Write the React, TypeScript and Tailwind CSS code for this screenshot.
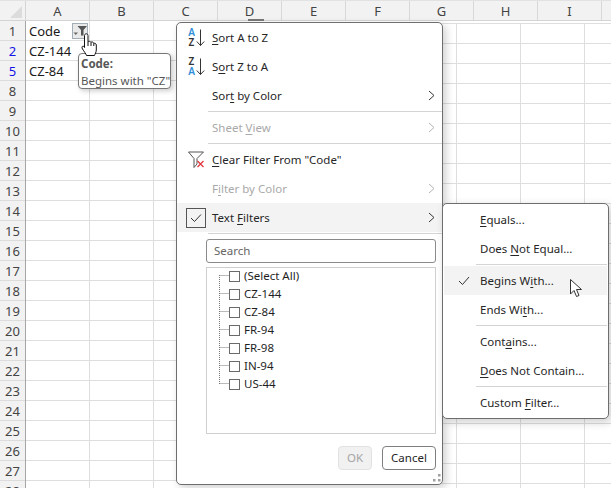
import React from "react";

const font = "font-['Noto_Sans','Open_Sans',sans-serif]";
const rowNums = [1, 2, 5, 8, 9, 10, 11, 12, 13, 14, 15, 16, 17, 18, 19, 20, 21, 22, 23, 24, 25, 26, 27, 28];
const cols = ["A", "B", "C", "D", "E", "F", "G", "H", "I"];
const treeItems = ["(Select All)", "CZ-144", "CZ-84", "FR-94", "FR-98", "IN-94", "US-44"];

function Label({ t }: { t: [string, string, string] }) {
  return (
    <span className="whitespace-pre">
      {t[0]}
      <u className="underline-offset-2">{t[1]}</u>
      {t[2]}
    </span>
  );
}

function Chevron({ disabled }: { disabled?: boolean }) {
  return (
    <svg width="7" height="11" viewBox="0 0 7 11" className="ml-auto mr-[7px]">
      <path d="M1 1l5 4.5L1 10" fill="none" stroke={disabled ? "#b4b4b4" : "#333"} strokeWidth="1" />
    </svg>
  );
}

function SortIcon({ top, bottom }: { top: string; bottom: string }) {
  const fill = (l: string) => (l === "A" ? "#2f8fd8" : "#333");
  return (
    <svg width="20" height="26" viewBox="0 -3 20 26">
      <text x="5.5" y="7.5" textAnchor="middle" fontSize="10" fontWeight="600" fill={fill(top)} fontFamily="Noto Sans">{top}</text>
      <text x="5.5" y="17.5" textAnchor="middle" fontSize="10" fontWeight="600" fill={fill(bottom)} fontFamily="Noto Sans">{bottom}</text>
      <path d="M14.5 1.5v16M10.8 13.5l3.7 4 3.7-4" fill="none" stroke="#333" strokeWidth="1" />
    </svg>
  );
}

function ClearIcon() {
  return (
    <svg width="20" height="20" viewBox="0 0 20 20">
      <path d="M2.5 2H17.5L11 8.5V14L8 17.5V8.5Z" fill="none" stroke="#555" strokeWidth="1" />
      <path d="M11.5 11l6 6M17.5 11l-6 6" fill="none" stroke="#e0383e" strokeWidth="1.3" />
    </svg>
  );
}

function CheckedBox() {
  return (
    <div className="flex h-5 w-5 items-center justify-center border-[1.5px] border-[#555]">
      <svg width="12" height="10" viewBox="0 0 12 10">
        <path d="M1 5l3.5 3.5L11 1.5" fill="none" stroke="#333" strokeWidth="1" />
      </svg>
    </div>
  );
}

function MenuRow({
  t,
  icon,
  chevron,
  disabled,
  active,
}: {
  t: [string, string, string];
  icon?: React.ReactNode;
  chevron?: boolean;
  disabled?: boolean;
  active?: boolean;
}) {
  return (
    <div className={`flex h-[29px] items-center ${active ? "bg-[#f3f3f3]" : ""} ${disabled ? "text-[#a9a9a9]" : "text-[#262626]"}`}>
      <div className="flex w-[35px] shrink-0 pl-[9px]">{icon}</div>
      <Label t={t} />
      {chevron && <Chevron disabled={disabled} />}
    </div>
  );
}

function SubRow({ t, active, check }: { t: [string, string, string]; active?: boolean; check?: boolean }) {
  return (
    <div className={`flex h-[29px] items-center ${active ? "bg-[#f3f3f3]" : ""} text-[#262626]`}>
      <div className="flex w-[36px] shrink-0 justify-end pr-[10px]">
        {check && (
          <svg width="12" height="10" viewBox="0 0 12 10">
            <path d="M1 5l3.5 3.5L11 1" fill="none" stroke="#333" strokeWidth="1" />
          </svg>
        )}
      </div>
      <Label t={t} />
    </div>
  );
}

function Sep({ left }: { left: string }) {
  return <div className={`my-px h-px bg-[#d4d4d4] ${left}`} />;
}

export default function App() {
  return (
    <div className={`relative h-[488px] w-[611px] overflow-hidden bg-white ${font}`}>
      {/* Column header */}
      <div className="relative z-10 flex h-[21px] border-t border-b border-t-[#e2e2e2] border-b-[#d4d4d4] bg-[#f2f2f2] text-[13px] leading-[21px] text-[#444]">
        <div className="flex w-[26px] shrink-0 items-end justify-end border-r border-[#d4d4d4] pb-[2px] pr-[3px]">
          <svg width="12" height="12" viewBox="0 0 12 12">
            <path d="M12 0V12H0Z" fill="#dcdcdc" />
          </svg>
        </div>
        {cols.map((c) => (
          <div key={c} className="relative w-16 shrink-0 border-r border-[#d8d8d8] text-center">
            {c}
            {c === "D" && <div className="absolute bottom-[-1px] left-[30px] h-[2px] w-[16px] bg-[#777]" />}
          </div>
        ))}
      </div>

      {/* Sheet body */}
      <div className="flex text-[13px] leading-[21px] text-[#1a1a1a]">
        <div className="w-[26px] shrink-0 border-r border-[#a6a6a6] bg-[#f2f2f2] text-[#444]">
          {rowNums.map((n) => (
            <div key={n} className={`h-5 border-b border-[#dcdcdc] text-center ${n === 2 || n === 5 ? "text-[#1414e6]" : ""}`}>
              {n}
            </div>
          ))}
        </div>
        <div className="w-[192px] shrink-0">
          {rowNums.map((n) => (
            <div key={n} className="flex h-5 border-b border-[#dedede]">
              <div className="w-16 border-r border-[#dedede] pl-[3px]">
                {n === 1 ? "Code" : n === 2 ? "CZ-144" : n === 5 ? "CZ-84" : ""}
              </div>
              <div className="w-16 border-r border-[#dedede]" />
              <div className="w-16" />
            </div>
          ))}
        </div>
        <div className="flex-1">
          <div className="h-[3px] border-b border-[#dedede]" />
          {rowNums.map((n) => (
            <div key={n} className="flex h-5 border-b border-[#dedede]">
              <div className="w-[239px] border-r border-[#dedede]" />
              <div className="w-16 border-r border-[#dedede]" />
              <div className="w-16 border-r border-[#dedede]" />
            </div>
          ))}
        </div>
      </div>

      {/* Filter button */}
      <div className="absolute left-[72px] top-[23px] z-20 h-4 w-4 border border-[#a3adb8] bg-[#e9e9e9]">
        <svg width="14" height="14" viewBox="0 0 14 14">
          <path d="M4.5 2H14L10.5 6V11.5H8V6Z" fill="#555" />
          <path d="M.5 8.5H5L2.75 11Z" fill="#666" />
        </svg>
      </div>

      {/* Tooltip */}
      <div className="absolute left-[78px] top-[53px] z-20 h-[36px] w-[93px] rounded-[4px] border border-[#777] bg-white pl-[2px] pt-[1px] text-[11.5px] leading-[17px] text-[#575757] shadow-[2px_2px_5px_rgba(0,0,0,0.2)]">
        <div className="font-bold">Code:</div>
        <div className="whitespace-pre">Begins with "CZ"</div>
      </div>

      {/* Hand cursor */}
      <svg className="absolute left-[81px] top-[33px] z-30" width="16" height="23" viewBox="0 0 16 23">
        <path
          d="M4.5 1C5.5.5 7 1 7 2.5V9C7.5 8 9.5 8 10 9.5 10.5 8.5 12.5 8.8 12.8 10.5 13.2 9.8 15.2 10.3 15.3 12V17C15.3 19 14 21 13.5 22.5H5.5C4.8 20.5 3 18.5 1.5 16 .5 14.5 1 13 2.3 13.2 3 13.3 3.3 14 3.5 14.5V2.5C3.5 1.7 4 1.2 4.5 1Z"
          fill="#fff"
          stroke="#111"
          strokeWidth="1"
        />
        <path d="M7 9v4M10 9.5v3.5M12.8 10.5V13" fill="none" stroke="#111" strokeWidth="1" />
      </svg>

      {/* Main dropdown */}
      <div className="absolute left-[176px] top-[22px] z-20 h-[463px] w-[267px] rounded-[5px] border border-[#6e6e6e] bg-white text-[11.5px] shadow-[3px_3px_8px_rgba(0,0,0,0.18)]">
        <MenuRow t={["", "S", "ort A to Z"]} icon={<SortIcon top="A" bottom="Z" />} />
        <MenuRow t={["S", "o", "rt Z to A"]} icon={<SortIcon top="Z" bottom="A" />} />
        <MenuRow t={["Sor", "t", " by Color"]} chevron />
        <Sep left="ml-[31px]" />
        <MenuRow t={["Sheet ", "V", "iew"]} chevron disabled />
        <Sep left="ml-[31px]" />
        <MenuRow t={["", "C", 'lear Filter From "Code"']} icon={<ClearIcon />} />
        <MenuRow t={["F", "i", "lter by Color"]} chevron disabled />
        <MenuRow t={["Text ", "F", "ilters"]} icon={<CheckedBox />} chevron active />
        <Sep left="ml-[31px]" />

        <div className="ml-[29px] mr-[6px] mt-[5px] flex h-6 items-center rounded-[3px] border border-[#8a8a8a] pl-[7px] text-[#666]">
          Search
        </div>

        <div className="relative ml-[29px] mr-[6px] mt-1 h-[167px] border border-[#cfcfcf] text-[#1f1f1f]">
          <div className="-mt-px">
            {treeItems.map((item) => (
              <div key={item} className="flex h-[18px] items-center pl-[22px]">
                <div className="h-[11px] w-[11px] border border-[#6a6a6a] bg-white" />
                <span className="ml-[4px]">{item}</span>
              </div>
            ))}
          </div>
          <svg className="absolute left-[12px] top-[7px]" width="11" height="112" viewBox="0 0 11 112">
            <path
              d="M.5 0V109M.5.5H10M.5 18.5H10M.5 36.5H10M.5 54.5H10M.5 72.5H10M.5 90.5H10M.5 108.5H10"
              fill="none"
              stroke="#777"
              strokeWidth="1"
              strokeDasharray="1 1"
            />
          </svg>
        </div>

        <div className="mr-[6px] mt-[12px] flex justify-end gap-[10px]">
          <div className="flex h-6 w-[34px] items-center justify-center rounded-[4px] border border-[#e2e2e2] bg-[#f1f1f1] text-[#a5a5a5]">OK</div>
          <div className="flex h-6 w-[54px] items-center justify-center rounded-[4px] border border-[#7f7f7f] text-[#262626]">Cancel</div>
        </div>

        <svg className="absolute bottom-[1px] right-[1px]" width="10" height="10" viewBox="0 0 10 10">
          <path d="M7 1h2.5v2.5H7ZM2 6h2.5v2.5H2ZM7 6h2.5v2.5H7Z" fill="#a0a0a0" />
        </svg>
      </div>

      {/* Submenu */}
      <div className="absolute left-[442px] top-[203px] z-20 h-[216px] w-[167px] rounded-[5px] border border-[#6e6e6e] bg-white pl-px pr-px pt-[1px] text-[11.5px] shadow-[3px_3px_10px_rgba(0,0,0,0.2)]">
        <SubRow t={["", "E", "quals..."]} />
        <SubRow t={["Does ", "N", "ot Equal..."]} />
        <Sep left="ml-[32px]" />
        <SubRow t={["Begins W", "i", "th..."]} active check />
        <SubRow t={["Ends Wi", "t", "h..."]} />
        <Sep left="ml-[32px]" />
        <SubRow t={["Cont", "a", "ins..."]} />
        <SubRow t={["", "D", "oes Not Contain..."]} />
        <Sep left="ml-[32px]" />
        <SubRow t={["Custom ", "F", "ilter..."]} />
      </div>

      {/* Arrow cursor */}
      <svg className="absolute left-[570px] top-[279px] z-30" width="13" height="19" viewBox="0 0 13 19">
        <path d="M.5.5V15L4 11.5 6.5 17.5 9 16.5 6.5 10.5H11.5Z" fill="#fff" stroke="#333" strokeWidth="1" />
      </svg>
    </div>
  );
}
